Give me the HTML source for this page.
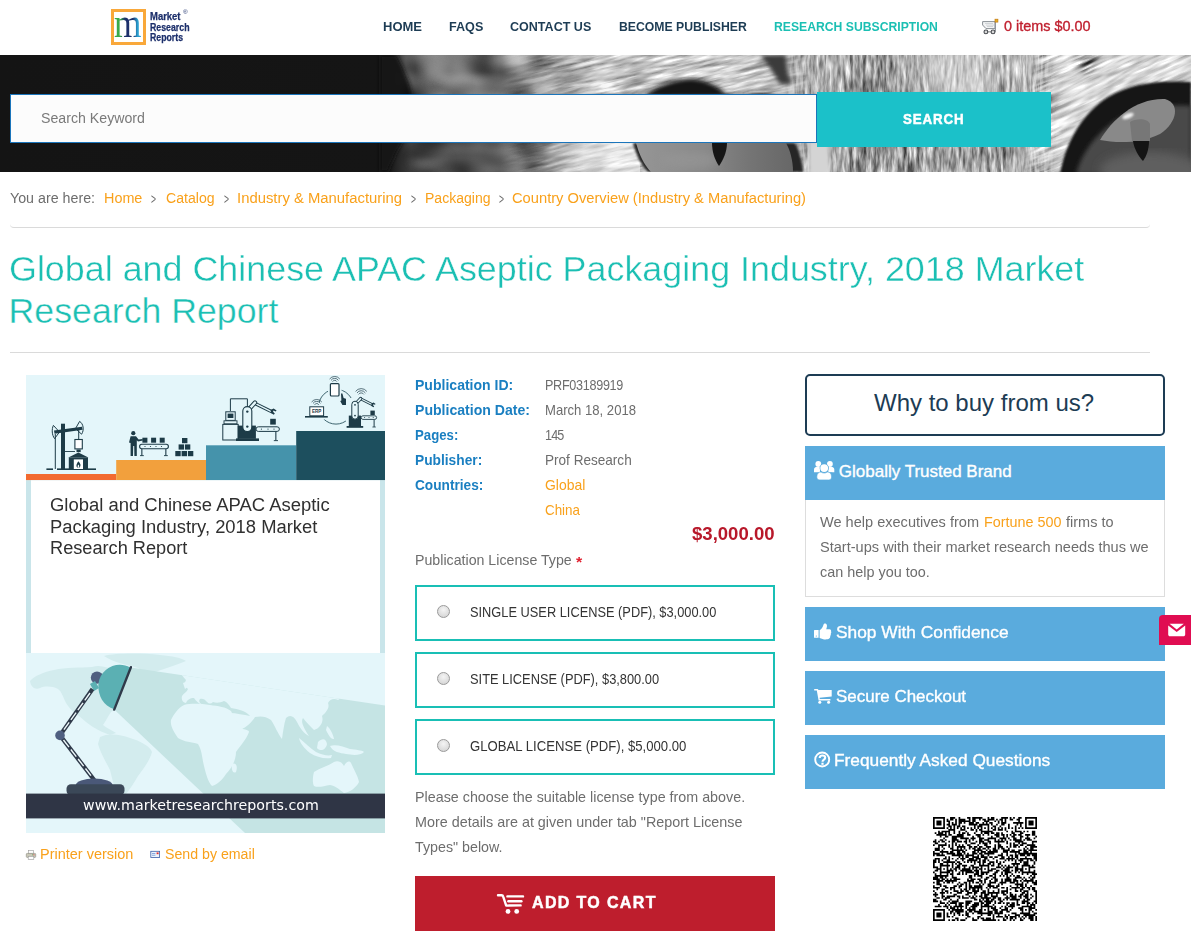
<!DOCTYPE html>
<html lang="en"><head><meta charset="utf-8"><title>Global and Chinese APAC Aseptic Packaging Industry, 2018 Market Research Report</title>
<style>
html,body{margin:0;padding:0;background:#fff;}
body{width:1191px;height:936px;position:relative;overflow:hidden;font-family:'Liberation Sans',sans-serif;}
.t{position:absolute;white-space:pre;transform-origin:0 50%;}
.a{position:absolute;}
svg{position:absolute;overflow:visible;}
</style></head><body>
<!-- logo -->
<div class="a" style="left:111px;top:9px;width:29px;height:30px;border:3px solid #f9a83a;background:#fff"></div>
<span class="t" style="left:114.4px;top:2.7px;font:400 41px/1 'Liberation Serif',serif;color:transparent;background:linear-gradient(90deg,#3aaa4a 0%,#3aaa4a 22%,#1c2f6b 40%,#1c2f6b 68%,#2aa0d0 86%,#2aa0d0 100%);-webkit-background-clip:text;background-clip:text;transform:scaleX(0.86)">m</span>
<!-- search input & button -->
<div class="a" style="left:0;top:55px;width:1191px;height:117px;background:#141414"></div>
<!--BANNER-->
<!-- hr lines -->
<div class="a" style="left:10px;top:222px;width:1140px;height:5px;border-bottom:1px solid #dadada;border-radius:0 0 4px 4px"></div>
<div class="a" style="left:10px;top:352px;width:1140px;height:1px;background:#dadada"></div>
<!-- license boxes -->
<div class="a" style="left:415px;top:585px;width:356px;height:52px;border:2px solid #19bfb5"></div>
<div class="a" style="left:415px;top:652px;width:356px;height:52px;border:2px solid #19bfb5"></div>
<div class="a" style="left:415px;top:719px;width:356px;height:52px;border:2px solid #19bfb5"></div>
<div class="a" style="left:437px;top:605px;width:11px;height:11px;border-radius:50%;border:1px solid #9a9a9a;background:radial-gradient(circle at 50% 35%,#f4f4f4,#cfcfcf)"></div>
<div class="a" style="left:437px;top:672px;width:11px;height:11px;border-radius:50%;border:1px solid #9a9a9a;background:radial-gradient(circle at 50% 35%,#f4f4f4,#cfcfcf)"></div>
<div class="a" style="left:437px;top:739px;width:11px;height:11px;border-radius:50%;border:1px solid #9a9a9a;background:radial-gradient(circle at 50% 35%,#f4f4f4,#cfcfcf)"></div>
<!-- add to cart -->
<div class="a" style="left:415px;top:876px;width:360px;height:55px;background:#be1e2d"></div>
<!-- right column -->
<div class="a" style="left:805px;top:374px;width:356px;height:58px;border:2px solid #1d3c54;border-radius:5px"></div>
<div class="a" style="left:805px;top:446px;width:360px;height:54px;background:#5aabdd"></div>
<div class="a" style="left:805px;top:500px;width:358px;height:96px;border:1px solid #ddd;border-top:none"></div>
<div class="a" style="left:805px;top:607px;width:360px;height:54px;background:#5aabdd"></div>
<div class="a" style="left:805px;top:671px;width:360px;height:54px;background:#5aabdd"></div>
<div class="a" style="left:805px;top:735px;width:360px;height:54px;background:#5aabdd"></div>
<div class="a" style="left:1159px;top:615px;width:32px;height:30px;background:#e00d52;border-radius:4px 0 0 0"></div>

<svg style="left:0;top:55px" width="1191" height="117" viewBox="0 55 1191 117">
<defs>
<linearGradient id="gL" gradientUnits="userSpaceOnUse" x1="0" y1="0" x2="1191" y2="0">
<stop offset="0" stop-color="#141414"/><stop offset="0.327" stop-color="#151515"/><stop offset="0.341" stop-color="#606060"/><stop offset="0.36" stop-color="#7a7a7a"/><stop offset="0.42" stop-color="#808080"/><stop offset="0.46" stop-color="#9a9a9a"/><stop offset="0.51" stop-color="#c2c2c2"/><stop offset="0.63" stop-color="#c6c6c6"/><stop offset="0.68" stop-color="#b0b0b0"/><stop offset="0.76" stop-color="#acacac"/><stop offset="0.80" stop-color="#c0c0c0"/><stop offset="0.84" stop-color="#b4b4b4"/><stop offset="0.875" stop-color="#bcbcbc"/><stop offset="0.9" stop-color="#d8d8d8"/><stop offset="1" stop-color="#d4d4d4"/>
</linearGradient>
<linearGradient id="gB" gradientUnits="userSpaceOnUse" x1="0" y1="0" x2="1191" y2="0">
<stop offset="0" stop-color="#141414"/><stop offset="0.325" stop-color="#151515"/><stop offset="0.345" stop-color="#3e3e3e"/><stop offset="0.39" stop-color="#484848"/><stop offset="0.42" stop-color="#5e5e5e"/><stop offset="0.46" stop-color="#8a8a8a"/><stop offset="0.49" stop-color="#d8d8d8"/><stop offset="0.525" stop-color="#e2e2e2"/>
</linearGradient>
<filter id="furH" x="0" y="0" width="100%" height="100%" color-interpolation-filters="sRGB">
<feTurbulence type="fractalNoise" baseFrequency="0.032 0.24" numOctaves="3" seed="7"/>
<feColorMatrix type="matrix" values="1.4 1.4 0 0 -0.88  1.4 1.4 0 0 -0.88  1.4 1.4 0 0 -0.88  0 0 0 0 1"/>
</filter>
<filter id="furV" x="0" y="0" width="100%" height="100%" color-interpolation-filters="sRGB">
<feTurbulence type="fractalNoise" baseFrequency="0.3 0.05" numOctaves="3" seed="3"/>
<feColorMatrix type="matrix" values="0.9 0.9 0 0 -0.4  0.9 0.9 0 0 -0.4  0.9 0.9 0 0 -0.4  0 0 0 0 1"/>
</filter>
<filter id="mot" x="0" y="0" width="100%" height="100%" color-interpolation-filters="sRGB"><feTurbulence type="fractalNoise" baseFrequency="0.02 0.035" numOctaves="2" seed="5"/><feColorMatrix type="matrix" values="0.7 0.7 0 0 -0.2  0.7 0.7 0 0 -0.2  0.7 0.7 0 0 -0.2  0 0 0 0 1"/></filter>
<linearGradient id="fadeM" gradientUnits="userSpaceOnUse" x1="395" y1="0" x2="600" y2="0"><stop offset="0" stop-color="#000"/><stop offset="0.1" stop-color="#fff"/><stop offset="0.6" stop-color="#fff"/><stop offset="1" stop-color="#000"/></linearGradient>
<mask id="mM"><rect x="395" y="55" width="205" height="117" fill="url(#fadeM)"/></mask>
<filter id="bl2"><feGaussianBlur stdDeviation="2"/></filter>
<filter id="bl1"><feGaussianBlur stdDeviation="0.8"/></filter>
<filter id="bl4"><feGaussianBlur stdDeviation="5"/></filter>
<filter id="bl8"><feGaussianBlur stdDeviation="9"/></filter>
<clipPath id="cb"><rect x="0" y="55" width="1191" height="117"/></clipPath>
<linearGradient id="fadeL" gradientUnits="userSpaceOnUse" x1="500" y1="0" x2="620" y2="0"><stop offset="0" stop-color="#000"/><stop offset="1" stop-color="#fff"/></linearGradient>
<linearGradient id="fadeR" gradientUnits="userSpaceOnUse" x1="755" y1="0" x2="815" y2="0"><stop offset="0" stop-color="#fff"/><stop offset="1" stop-color="#000"/></linearGradient>
<mask id="mH"><rect x="500" y="55" width="256" height="117" fill="url(#fadeL)"/><rect x="755" y="55" width="60" height="117" fill="url(#fadeR)"/></mask>
<mask id="mV"><rect x="795" y="40" width="250" height="150" fill="#fff" filter="url(#bl8)"/></mask>
<mask id="mR"><path d="M1040 40 L1200 40 L1200 100 L1110 100 C1090 120,1075 150,1070 190 L1030 190Z" fill="#fff" filter="url(#bl4)"/></mask>
</defs>
<g clip-path="url(#cb)">
<rect x="0" y="55" width="1191" height="117" fill="url(#gL)"/>
<rect x="0" y="143" width="640" height="29" fill="url(#gB)"/>
<!-- curved black edge on left -->
<path d="M380 55 L397 55 C404 70,412 85,413 100 C413 120,404 140,398 150 C394 158,390 166,388 172 L380 172Z" fill="#151515" filter="url(#bl2)"/>
<!-- blurry mottling on left fur -->
<g filter="url(#bl4)" opacity="0.55"><ellipse cx="440" cy="68" rx="25" ry="9" fill="#909090"/><ellipse cx="500" cy="86" rx="20" ry="8" fill="#555"/><ellipse cx="430" cy="160" rx="18" ry="7" fill="#666"/><ellipse cx="475" cy="62" rx="14" ry="6" fill="#505050"/><ellipse cx="540" cy="66" rx="16" ry="6" fill="#606060"/></g>
<!-- forehead darker stripes -->
<g filter="url(#bl4)" opacity="0.55"><rect x="850" y="55" width="40" height="117" fill="#7a7a7a"/><rect x="900" y="140" width="110" height="32" fill="#808080"/><rect x="930" y="55" width="60" height="40" fill="#d8d8d8"/><path d="M1075 55 L1098 55 L1092 75 L1082 72Z" fill="#444"/></g>
<g mask="url(#mM)" style="mix-blend-mode:overlay"><rect x="395" y="55" width="205" height="117" filter="url(#mot)"/></g>
<!-- fur textures -->
<g mask="url(#mH)" style="mix-blend-mode:overlay"><g transform="rotate(-13 700 100)"><rect x="450" y="0" width="500" height="260" filter="url(#furH)"/></g></g>
<g mask="url(#mR)" style="mix-blend-mode:overlay"><g transform="rotate(-24 1120 80)"><rect x="980" y="-40" width="320" height="300" filter="url(#furH)"/></g></g>
<g mask="url(#mV)" style="mix-blend-mode:overlay"><rect x="770" y="55" width="300" height="117" filter="url(#furV)"/></g>
<!-- left eye: upper dark lid -->
<path d="M643 97 C656 85,676 79,692 79 C708 80,720 87,729 97Z" fill="#181818" filter="url(#bl2)"/>
<path d="M736 96 C750 92,765 92,782 96Z" fill="#2a2a2a" filter="url(#bl1)"/>
<!-- dark vertical stripe between eyes -->
<path d="M760 55 L786 55 C786 66,788 76,792 84 L780 84 C774 74,768 64,760 55Z" fill="#3a3a3a" filter="url(#bl2)"/>
<!-- left eye lower: iris -->
<path d="M633 143 C636 155,641 165,648 172 L803 172 C802 160,799 150,795 143Z" fill="#262626" filter="url(#bl1)"/>
<linearGradient id="gI" gradientUnits="userSpaceOnUse" x1="635" y1="0" x2="790" y2="0"><stop offset="0" stop-color="#969696"/><stop offset="0.45" stop-color="#888"/><stop offset="0.75" stop-color="#747474"/><stop offset="1" stop-color="#686868"/></linearGradient><path d="M636 143 C639 154,644 165,651 172 L793 172 C793 160,790 150,786 143Z" fill="url(#gI)"/>
<ellipse cx="690" cy="160" rx="30" ry="8" fill="#969696" filter="url(#bl4)" opacity="0.7"/>
<path d="M712 143 L727 143 C727 152,723 160,719 166 C715 160,712 152,712 143Z" fill="#161616"/>
<rect x="808" y="140" width="22" height="36" fill="#d4d4d4" filter="url(#bl2)"/>
<!-- right eye -->
<path d="M1060 174 C1066 140,1084 112,1108 97 C1132 83,1160 80,1191 82 L1191 174Z" fill="#151515" filter="url(#bl1)"/>
<path d="M1076 174 C1082 152,1096 134,1116 120 C1138 108,1165 104,1191 106 L1191 174Z" fill="#484848" filter="url(#bl2)"/><ellipse cx="1150" cy="170" rx="50" ry="18" fill="#5e5e5e" filter="url(#bl4)"/>
<path d="M1100 140 C1112 120,1135 98,1165 99 C1180 103,1178 122,1160 134 C1140 144,1116 143,1100 140Z" fill="#898989"/>
<path d="M1130 122 C1136 118,1148 118,1150 124 L1150 141 L1132 141Z" fill="#777"/>
<path d="M1133 141 L1149 141 C1149 150,1146 157,1143 161 C1138 156,1134 148,1133 141Z" fill="#141414"/>
<ellipse cx="1128" cy="116" rx="6" ry="2.6" transform="rotate(-22 1128 116)" fill="#f0f0f0" filter="url(#bl1)"/>
</g>
</svg>
<!-- search input & button -->
<div class="a" style="left:10px;top:94px;width:805px;height:47px;border:1px solid #1b75bb;background:#fcfcfc"></div>
<div class="a" style="left:817px;top:92px;width:234px;height:55px;background:#1bc1c9"></div>

<svg style="left:26px;top:375px" width="359" height="458" viewBox="26 375 359 458">
<defs><clipPath id="cc"><rect x="26" y="375" width="359" height="458"/></clipPath></defs>
<g clip-path="url(#cc)">
<rect x="26" y="375" width="359" height="458" fill="#e4f6fa"/>
<!-- steps -->
<rect x="26" y="474" width="90.2" height="6.3" fill="#f26a30"/>
<rect x="116.2" y="460" width="90" height="20.3" fill="#f2a03d"/>
<rect x="206" y="445.3" width="90.2" height="35" fill="#4593ab"/>
<rect x="296.2" y="431" width="88.8" height="49.3" fill="#1d4f5e"/>
<!-- white panel -->
<rect x="26" y="480.3" width="359" height="172.7" fill="#c9e5ea"/>
<rect x="31" y="480.3" width="349" height="172.7" fill="#fff"/>
<g fill="#1d3b47" stroke="none">
<!-- pump / forge -->
<rect x="46.4" y="468.4" width="6.6" height="1.6"/><rect x="57" y="468.4" width="39" height="1.6"/>
<rect x="61" y="423.7" width="4" height="45.5"/>
<rect x="54.8" y="434" width="1" height="35"/>
<path d="M54 430.6 L82 426.8 L82.6 429.8 L54.6 433.8Z"/>
<path d="M59.5 432 L53.4 425.4 C51.6 429,51.8 435,54.6 438.6Z" fill="none" stroke="#1d3b47" stroke-width="1" stroke-linejoin="round"/>
<path d="M75.5 428.6 L79.6 421.4 C83.4 423.6,84.4 430,81.6 434.2Z" fill="none" stroke="#1d3b47" stroke-width="1" stroke-linejoin="round"/>
<rect x="78.2" y="430" width="1" height="9"/>
<rect x="74.9" y="439.5" width="7.4" height="9.4" fill="#fff" stroke="#1d3b47" stroke-width="1.1"/>
<rect x="76.5" y="449.5" width="4.2" height="2.6"/>
<rect x="65" y="451" width="10" height="0.9"/>
<path d="M78.4 452.6 L88.4 457.6 L68.4 457.6Z"/>
<rect x="68.8" y="457.4" width="19.2" height="11.8"/>
<rect x="73.8" y="459.4" width="9.2" height="9.6" fill="#fff"/>
<path d="M78.4 461.2 C80.6 463.4,81.2 465.6,79.6 467.6 L77.2 467.6 C75.6 465.8,76.6 463.6,78.4 461.2Z"/>
<path d="M78.4 464.6 C79.3 465.6,79.4 466.6,78.9 467.4 L77.9 467.4 C77.4 466.6,77.6 465.6,78.4 464.6Z" fill="#fff"/>
<!-- worker -->
<circle cx="133.3" cy="433.2" r="2.1"/>
<path d="M130.6 436.2 L136 436.2 L138.6 439.4 L142.6 439 L142.8 440.6 L138 441.4 L136.8 440.2 L136.8 455.9 L134.4 455.9 L134.2 446 L133.2 446 L133 455.9 L130.6 455.9 L130.6 443 L129 442.6Z"/>
<!-- conveyor 1 -->
<rect x="139.6" y="444.3" width="28.8" height="4.4" rx="2.2" fill="#e4f6fa" stroke="#1d3b47" stroke-width="1.1"/>
<circle cx="145" cy="446.5" r="0.6"/><circle cx="150.5" cy="446.5" r="0.6"/><circle cx="156" cy="446.5" r="0.6"/><circle cx="161.5" cy="446.5" r="0.6"/>
<rect x="141.3" y="449" width="1.1" height="6.6"/><rect x="165.3" y="449" width="1.1" height="6.6"/>
<rect x="140" y="455.2" width="3.8" height="0.9"/><rect x="164" y="455.2" width="3.8" height="0.9"/>
<rect x="142.4" y="437.7" width="5" height="5"/><rect x="151.1" y="437.7" width="5" height="5"/><rect x="159.7" y="437.7" width="5" height="5"/>
<!-- stack -->
<rect x="182" y="438" width="5.4" height="5.2"/>
<rect x="178.6" y="444.4" width="5.4" height="5.2"/><rect x="184.9" y="444.4" width="5.4" height="5.2"/>
<rect x="175.3" y="451" width="5.4" height="5.2"/><rect x="181.6" y="451" width="5.4" height="5.2"/><rect x="187.9" y="451" width="5.4" height="5.2"/>
<!-- machine + robot arm -->
<path d="M230.4 411 L230.4 398.8 L247.4 398.8 L247.4 406" fill="none" stroke="#1d3b47" stroke-width="1"/>
<rect x="225.8" y="411.8" width="9.4" height="8.6" fill="#e4f6fa" stroke="#1d3b47" stroke-width="1"/>
<rect x="227.6" y="413.6" width="5.8" height="4.4"/>
<rect x="224" y="420.8" width="13" height="3" fill="#e4f6fa" stroke="#1d3b47" stroke-width="0.9"/>
<rect x="222.8" y="424.4" width="15.4" height="15.6" fill="#e4f6fa" stroke="#1d3b47" stroke-width="1"/>
<rect x="237.7" y="425.6" width="18.2" height="13.2"/>
<rect x="236" y="438.4" width="23" height="2.6"/>
<path d="M255 403.4 L271.4 411.6" stroke="#1d3b47" stroke-width="3.4" stroke-linecap="round" fill="none"/>
<path d="M255 403.4 L271.4 411.6" stroke="#e4f6fa" stroke-width="1.5" stroke-linecap="round" fill="none"/>
<path d="M247.4 411 L255 402.6" stroke="#1d3b47" stroke-width="4.4" stroke-linecap="round" fill="none"/>
<path d="M247.4 411 L255 402.6" stroke="#e4f6fa" stroke-width="2.4" stroke-linecap="round" fill="none"/>
<rect x="242.8" y="406.6" width="9" height="25" rx="4.5" fill="#e4f6fa" stroke="#1d3b47" stroke-width="1.1"/>
<circle cx="247.3" cy="411.6" r="1.2"/><circle cx="247.3" cy="426.6" r="1.2"/>
<path d="M270.6 410 L273.6 408.4 L276.6 410.4 L275.6 411.4 L273.6 410.4 L272.8 411.6 L274.8 413.6 L273.8 414.8 L271 413Z"/>
<rect x="270.2" y="418.8" width="5.6" height="5.8"/>
<rect x="256" y="426.8" width="23.4" height="4.6" rx="2.3" fill="#e4f6fa" stroke="#1d3b47" stroke-width="1"/>
<circle cx="261.4" cy="429.1" r="0.6"/><circle cx="268" cy="429.1" r="0.6"/><circle cx="274" cy="429.1" r="0.6"/>
<rect x="275.3" y="431.6" width="1.1" height="9"/><rect x="273.8" y="440.2" width="4.2" height="0.9"/>
<!-- IoT -->
<circle cx="336" cy="406.7" r="17.4" fill="none" stroke="#2b5560" stroke-width="0.9"/>
<rect x="328" y="381" width="13.6" height="17.4" fill="#e4f6fa"/>
<rect x="330.4" y="383.6" width="8.6" height="12.4" rx="1" fill="#fff" stroke="#1d3b47" stroke-width="1.2"/>
<g fill="none" stroke="#1d3b47" stroke-width="0.7"><path d="M332.6 381.6 A2.4 2.4 0 0 1 336.8 381.6"/><path d="M331 380.4 A4.4 4.4 0 0 1 338.4 380.4"/><path d="M329.6 379 A6.4 6.4 0 0 1 339.8 379"/></g>
<path d="M341 393.6 L342.4 393.4 L343.6 398 L346.6 399 L347.2 403 L346 405 L342.4 405 L340.2 401 L341.4 400.4Z"/>
<rect x="304" y="402" width="25" height="17.4" fill="#e4f6fa"/>
<rect x="309.8" y="406.8" width="13.8" height="9" fill="#fff" stroke="#1d3b47" stroke-width="1"/>
<rect x="305" y="416" width="22.8" height="1.6"/>
<g fill="none" stroke="#1d3b47" stroke-width="0.7"><path d="M314.6 404.8 A2.4 2.4 0 0 1 318.8 404.8"/><path d="M313 403.4 A4.4 4.4 0 0 1 320.4 403.4"/><path d="M311.6 402 A6.4 6.4 0 0 1 321.8 402"/></g>
<rect x="346" y="398" width="32" height="30" fill="#e4f6fa"/>
<rect x="348.8" y="415.6" width="12.2" height="10.8"/><rect x="346.6" y="426" width="16.6" height="1.8"/>
<path d="M360.6 398.8 L372 404.6" stroke="#1d3b47" stroke-width="2.8" stroke-linecap="round" fill="none"/>
<path d="M360.6 398.8 L372 404.6" stroke="#e4f6fa" stroke-width="1.1" stroke-linecap="round" fill="none"/>
<path d="M355 404.6 L360.6 398.6" stroke="#1d3b47" stroke-width="3.4" stroke-linecap="round" fill="none"/>
<path d="M355 404.6 L360.6 398.6" stroke="#e4f6fa" stroke-width="1.6" stroke-linecap="round" fill="none"/>
<rect x="351.8" y="401.2" width="6.4" height="18" rx="3.2" fill="#e4f6fa" stroke="#1d3b47" stroke-width="1"/>
<circle cx="355" cy="404.8" r="0.9"/><circle cx="355" cy="415.6" r="0.9"/>
<path d="M371.4 403.4 L373.6 402.4 L375.6 404 L374.8 404.8 L373.4 404 L372.8 405 L374.2 406.4 L373.4 407.2 L371.4 406Z"/>
<g fill="none" stroke="#1d3b47" stroke-width="0.7"><path d="M358.6 394.4 A3 3 0 0 1 363.8 394.4"/><path d="M357 393 A5 5 0 0 1 365.4 393"/><path d="M355.6 391.4 A7 7 0 0 1 366.8 391.4"/></g>
<rect x="370.4" y="410.6" width="4.4" height="4.4"/>
<rect x="361.2" y="415.8" width="15.4" height="3.6" rx="1.8" fill="#e4f6fa" stroke="#1d3b47" stroke-width="0.9"/>
<circle cx="364.6" cy="417.6" r="0.5"/><circle cx="369" cy="417.6" r="0.5"/><circle cx="373.2" cy="417.6" r="0.5"/>
<rect x="373.6" y="419.6" width="1" height="7.4"/><rect x="372.4" y="426.6" width="3.4" height="0.8"/>
</g>
<text x="316.7" y="413.3" font-family="'Liberation Sans',sans-serif" font-size="4.6" font-weight="700" fill="#1d3b47" text-anchor="middle">ERP</text>

<defs><clipPath id="beam"><path d="M130.7 667.4 L385 705.6 L385 833 L245 833 L113.9 709.3Z"/></clipPath></defs>
<!-- map outside beam (Americas, Greenland) -->
<g fill="#d3ecee">
<path d="M30 681 C34 676,44 672,54 670 C66 667,80 668,92 667 C100 664,108 668,116 670 C124 672,132 678,136 684 C134 690,128 694,124 699 C120 704,116 709,111 712 C108 716,106 721,103 725 C106 728,112 730,116 733 L110 735 C104 733,98 730,93 727 C88 724,84 720,79 716 C74 713,70 709,66 703 C63 697,62 692,58 689 C52 686,45 686,40 688 C36 690,31 688,30 681Z"/>
<path d="M104 656 C116 653,140 653,160 655 C172 656,182 658,186 661 C178 664,168 668,158 671 C150 674,144 672,138 668 C128 665,112 662,104 656Z"/>
<path d="M100 737 C108 733,120 734,130 738 C140 741,150 746,152 752 C150 760,144 768,138 776 C134 783,130 789,126 794 L116 794 C114 786,112 778,110 770 C106 762,100 752,98 744Z"/>
</g>
<!-- beam -->
<path d="M130.7 667.4 L385 705.6 L385 833 L245 833 L113.9 709.3Z" fill="#c5e4e4"/>
<g clip-path="url(#beam)" fill="#e4f6fa">
<!-- Eurasia (merges with bg above beam) -->
<path d="M176 660 L392 660 L392 700 C380 698,366 696,352 694 C346 694,342 697,338 700 C334 698,330 699,328 703 C330 708,326 712,322 716 C324 722,320 728,314 730 C310 726,306 722,303 718 C300 722,305 730,309 736 C304 734,300 728,297 722 C294 716,290 714,286 718 C284 724,283 732,282 739 C278 734,275 726,271 720 C266 716,260 716,255 717 C252 722,246 728,241 729 C238 724,234 718,230 713 C236 713,244 715,250 716 C246 711,238 709,231 708 C229 705,227 702,224 701 C220 703,216 703,213 702 C211 704,209 704,207 702 C205 699,202 698,200 699 C198 701,200 704,203 705 C199 704,196 701,194 698 C190 698,187 700,186 703 C183 703,181 700,182 696 C184 693,187 692,188 689 C185 687,184 684,186 680 C182 676,178 670,176 660Z"/>
<!-- UK etc. -->
<path d="M183 683 L188 681 L189 686 L185 689Z"/>
<!-- Mediterranean cut handled by path above; Africa -->
<path d="M184 705 C192 703,202 704,210 705 C218 706,226 707,231 711 C234 718,238 724,243 729 C246 730,249 730,249 732 C246 740,240 746,236 752 C236 760,232 768,226 774 C222 780,218 784,212 786 C208 782,206 774,204 766 C202 758,202 750,198 744 C192 742,184 742,178 738 C174 732,170 726,171 720 C174 714,178 708,184 705Z"/>
<path d="M232 764 C236 762,238 766,236 772 C233 774,231 770,232 764Z"/>
<!-- Indonesia -->
<path d="M299 738 C304 742,310 748,316 752 C322 755,328 756,332 755 L331 758 C324 759,316 757,310 753 C304 748,300 743,299 738Z"/>
<path d="M318 742 C322 738,326 738,327 744 C326 750,320 752,317 748Z"/>
<path d="M330 746 C336 744,344 747,350 749 C356 750,362 750,364 752 C360 756,352 755,346 754 C340 753,333 752,330 746Z"/>
<path d="M327 726 C330 728,333 734,334 739 C331 740,328 734,326 730Z"/>
<!-- Australia -->
<path d="M314 772 C320 768,328 766,334 762 C338 760,342 762,344 766 C346 762,349 760,351 763 C354 770,358 776,359 782 C356 788,350 792,344 793 C340 790,336 786,330 785 C324 786,318 788,314 786 C312 782,313 776,314 772Z"/>
</g>
<!-- lamp -->
<circle cx="97" cy="677.6" r="6.2" fill="#4f5f80"/>
<path d="M90 684 L95 681 L99 688 L94 691Z" fill="#5bb0b3"/>
<g stroke="#2f3a4a" stroke-width="4.2" stroke-linecap="butt" fill="none"><path d="M92.5 689 L60 735.4"/><path d="M60 735.4 L94.2 780"/></g>
<g stroke="#eef8fa" stroke-width="1.4" stroke-dasharray="9 3" fill="none"><path d="M90 693 L63 731"/><path d="M63.5 740 L92 777"/></g>
<circle cx="60" cy="735.4" r="4.8" fill="#4f5f80"/>
<path d="M130.2 667.6 C118 660,100 668,98.4 684 C97.6 696,104 706,113.6 709Z" fill="#5bb0b3"/>
<path d="M130.9 667.2 L114.2 709.6" stroke="#2f3a4a" stroke-width="2.4" stroke-linecap="round" fill="none"/>
<ellipse cx="94.2" cy="785.4" rx="18.5" ry="7" fill="#4a5878"/>
<rect x="66.5" y="784.2" width="58" height="11" rx="4.5" fill="#3b4858"/>
<!-- url band -->
<rect x="26" y="793.6" width="359" height="24.8" fill="#2f3545"/>

</g>
</svg>

<svg style="left:0;top:0" width="1191" height="936" viewBox="0 0 1191 936">
<!-- header cart icon -->
<g>
<path d="M982.6 21.6 L995 21.6 L995 28.6 L986 28.6 L982.6 25Z" fill="#f3f4f5" stroke="#8b9096" stroke-width="1"/>
<g fill="#9aa0a6"><circle cx="986" cy="23.6" r="0.5"/><circle cx="988" cy="23.6" r="0.5"/><circle cx="990" cy="23.6" r="0.5"/><circle cx="992" cy="23.6" r="0.5"/><circle cx="987" cy="25" r="0.5"/><circle cx="989" cy="25" r="0.5"/><circle cx="991" cy="25" r="0.5"/><circle cx="993" cy="25" r="0.5"/><circle cx="988" cy="26.4" r="0.5"/><circle cx="990" cy="26.4" r="0.5"/><circle cx="992" cy="26.4" r="0.5"/></g>
<path d="M995.4 21 L995.4 31 C995.4 32.4,994.4 32.6,993.6 32.6" fill="none" stroke="#8b9096" stroke-width="1"/>
<rect x="987" y="31.2" width="6" height="1.2" fill="#9a9a9a"/>
<circle cx="985.9" cy="31.9" r="1.9" fill="#d8d8d8" stroke="#4a4d52" stroke-width="1.1"/>
<circle cx="993" cy="31.9" r="1.9" fill="#d8d8d8" stroke="#4a4d52" stroke-width="1.1"/>
<rect x="995" y="19.2" width="2.9" height="2.9" fill="#e8b020" stroke="#c47a12" stroke-width="0.7"/>
</g>
<!-- printer icon -->
<g>
<rect x="28.4" y="850.4" width="5.2" height="3.4" fill="#fdfdfd" stroke="#9a9a9a" stroke-width="0.6"/>
<rect x="26.3" y="853.4" width="9.4" height="4" rx="0.8" fill="#c9c8b8" stroke="#8c8b80" stroke-width="0.6"/>
<rect x="28.2" y="856.4" width="5.6" height="3" fill="#fdfdfd" stroke="#9a9a9a" stroke-width="0.6"/>
<rect x="33.4" y="854.4" width="1" height="0.9" fill="#d33"/><rect x="32" y="854.4" width="1" height="0.9" fill="#6a6"/>
</g>
<!-- email icon -->
<g>
<rect x="150.8" y="851.3" width="8.8" height="6.2" fill="#eef4fc" stroke="#3b5fa8" stroke-width="0.8"/>
<rect x="152" y="853" width="3.4" height="0.8" fill="#6d96d8"/><rect x="152" y="854.8" width="3.4" height="0.8" fill="#6d96d8"/>
<rect x="156.6" y="852.4" width="2" height="1.8" fill="#e03030"/>
</g>
<!-- add to cart icon -->
<g fill="none" stroke="#fff" stroke-width="2.4" stroke-linecap="round" stroke-linejoin="round">
<path d="M498 895.2 L501.6 895.2 C502.6 895.2,503 895.8,503.3 896.8 L506.2 905.6 L520.6 905.4"/>
<path d="M507.4 896.4 L523 896.4"/><path d="M508.4 901.2 L521.4 901.2"/>
</g>
<circle cx="508" cy="911.4" r="2.4" fill="#fff"/><circle cx="516.7" cy="911.4" r="2.4" fill="#fff"/>
<!-- users icon -->
<g fill="#fff">
<circle cx="818.3" cy="464" r="2.9"/><circle cx="829.9" cy="464" r="2.9"/>
<path d="M814 472.2 L814 469.6 C814 467.6,815.6 467,817 467 L820 467 L820 472.2 Z"/>
<path d="M834.3 472.2 L834.3 469.6 C834.3 467.6,832.7 467,831.3 467 L828.3 467 L828.3 472.2 Z"/>
<circle cx="824.2" cy="468.1" r="4.6" fill="#5aabdd"/>
<circle cx="824.2" cy="468.1" r="3.9"/>
<path d="M816.2 472.6 L832.2 472.6 L832.2 473.6 Z" fill="#5aabdd"/>
<path d="M816.8 477 C816.8 473.6,818.6 472,821 472 C823 473.4,825.4 473.4,827.4 472 C829.8 472,831.6 473.6,831.6 477 C831.6 479,830.2 479.9,828.6 479.9 L819.8 479.9 C818.2 479.9,816.8 479,816.8 477Z" stroke="#5aabdd" stroke-width="0.6"/>
</g>
<!-- thumbs up -->
<g fill="#fff">
<rect x="814" y="630" width="4.6" height="7.8" rx="0.5"/>
<circle cx="816.3" cy="636" r="0.6" fill="#5aabdd"/>
<path d="M819.6 630.2 C821.6 629,822.8 627,823.4 625 C823.8 623.6,825 623.2,826 623.8 C827.2 624.6,827.2 626.4,826.6 628 L826.2 629.2 L829.6 629.2 C830.8 629.2,831.4 630.2,831 631.2 C831.4 631.8,831.4 632.8,830.8 633.6 C831 634.4,830.8 635.4,830.2 636 C830.4 637,830 638,829.2 638.6 C828.4 639.4,827 639.5,825.6 639.5 C823.4 639.5,821.6 638.8,819.6 638Z"/>
</g>
<!-- cart icon (panel) -->
<g fill="#fff">
<path d="M814.2 689 L817.4 689 C818 689,818.3 689.4,818.4 690 L831.7 690 L831.7 696.4 L819.6 697.8 L819.8 699 L830.4 699 L830.4 700.6 L818.6 700.6 L816.8 690.4 L814.2 690.4Z"/>
<circle cx="819.8" cy="702.2" r="1.5"/><circle cx="828.6" cy="702.2" r="1.5"/>
</g>
<!-- question circle -->
<circle cx="822.2" cy="759.5" r="7" fill="none" stroke="#fff" stroke-width="1.9"/>
<path d="M819.7 758 C819.7 756.4,820.8 755.5,822.4 755.5 C824.1 755.5,825.2 756.4,825.2 757.7 C825.2 759.6,822.5 759.7,822.5 761.7" fill="none" stroke="#fff" stroke-width="2.1"/>
<rect x="821.4" y="762.7" width="2.2" height="2.1" fill="#fff"/>
<!-- envelope -->
<path d="M1169.6 623.8 L1183.8 623.8 L1176.7 629.6Z" fill="#fff"/>
<path d="M1168.2 625.6 L1176.7 632 L1185.2 625.6 L1185.2 634.4 C1185.2 635.6,1184.4 636.2,1183.4 636.2 L1170 636.2 C1169 636.2,1168.2 635.6,1168.2 634.4Z" fill="#fff"/>
</svg>

<svg style="left:933.0px;top:817.0px" width="104.0" height="104.0" viewBox="0 0 61 61" shape-rendering="geometricPrecision"><rect width="61" height="61" fill="#fff"/><path d="M0 0h7v1h-7zM10 0h3v1h-3zM15 0h1v1h-1zM20 0h2v1h-2zM23 0h6v1h-6zM32 0h1v1h-1zM34 0h2v1h-2zM40 0h4v1h-4zM45 0h1v1h-1zM47 0h1v1h-1zM50 0h2v1h-2zM54 0h7v1h-7zM0 1h1v1h-1zM6 1h1v1h-1zM8 1h1v1h-1zM10 1h2v1h-2zM13 1h1v1h-1zM15 1h4v1h-4zM21 1h1v1h-1zM23 1h2v1h-2zM27 1h1v1h-1zM29 1h2v1h-2zM32 1h4v1h-4zM37 1h1v1h-1zM39 1h2v1h-2zM42 1h1v1h-1zM45 1h2v1h-2zM49 1h2v1h-2zM54 1h1v1h-1zM60 1h1v1h-1zM0 2h1v1h-1zM2 2h3v1h-3zM6 2h1v1h-1zM8 2h2v1h-2zM13 2h1v1h-1zM15 2h7v1h-7zM23 2h2v1h-2zM30 2h3v1h-3zM36 2h1v1h-1zM38 2h1v1h-1zM40 2h1v1h-1zM42 2h1v1h-1zM50 2h1v1h-1zM54 2h1v1h-1zM56 2h3v1h-3zM60 2h1v1h-1zM0 3h1v1h-1zM2 3h3v1h-3zM6 3h1v1h-1zM9 3h1v1h-1zM11 3h1v1h-1zM13 3h1v1h-1zM15 3h2v1h-2zM18 3h1v1h-1zM21 3h3v1h-3zM25 3h2v1h-2zM29 3h1v1h-1zM31 3h1v1h-1zM33 3h2v1h-2zM38 3h1v1h-1zM40 3h3v1h-3zM47 3h6v1h-6zM54 3h1v1h-1zM56 3h3v1h-3zM60 3h1v1h-1zM0 4h1v1h-1zM2 4h3v1h-3zM6 4h1v1h-1zM8 4h2v1h-2zM11 4h3v1h-3zM15 4h1v1h-1zM21 4h5v1h-5zM27 4h6v1h-6zM34 4h1v1h-1zM37 4h1v1h-1zM40 4h2v1h-2zM44 4h1v1h-1zM49 4h1v1h-1zM51 4h1v1h-1zM54 4h1v1h-1zM56 4h3v1h-3zM60 4h1v1h-1zM0 5h1v1h-1zM6 5h1v1h-1zM9 5h2v1h-2zM12 5h1v1h-1zM14 5h2v1h-2zM17 5h2v1h-2zM24 5h1v1h-1zM26 5h3v1h-3zM32 5h1v1h-1zM35 5h2v1h-2zM39 5h1v1h-1zM44 5h1v1h-1zM48 5h1v1h-1zM51 5h1v1h-1zM54 5h1v1h-1zM60 5h1v1h-1zM0 6h7v1h-7zM8 6h1v1h-1zM10 6h1v1h-1zM12 6h1v1h-1zM14 6h1v1h-1zM16 6h1v1h-1zM18 6h1v1h-1zM20 6h1v1h-1zM22 6h1v1h-1zM24 6h1v1h-1zM26 6h1v1h-1zM28 6h1v1h-1zM30 6h1v1h-1zM32 6h1v1h-1zM34 6h1v1h-1zM36 6h1v1h-1zM38 6h1v1h-1zM40 6h1v1h-1zM42 6h1v1h-1zM44 6h1v1h-1zM46 6h1v1h-1zM48 6h1v1h-1zM50 6h1v1h-1zM52 6h1v1h-1zM54 6h7v1h-7zM9 7h4v1h-4zM16 7h3v1h-3zM22 7h2v1h-2zM25 7h1v1h-1zM27 7h2v1h-2zM32 7h1v1h-1zM35 7h2v1h-2zM38 7h3v1h-3zM42 7h1v1h-1zM48 7h1v1h-1zM3 8h1v1h-1zM5 8h5v1h-5zM12 8h1v1h-1zM15 8h1v1h-1zM19 8h1v1h-1zM25 8h1v1h-1zM28 8h7v1h-7zM43 8h1v1h-1zM46 8h1v1h-1zM48 8h4v1h-4zM53 8h1v1h-1zM55 8h1v1h-1zM58 8h2v1h-2zM1 9h1v1h-1zM3 9h3v1h-3zM7 9h1v1h-1zM9 9h1v1h-1zM12 9h1v1h-1zM15 9h1v1h-1zM17 9h2v1h-2zM20 9h1v1h-1zM24 9h1v1h-1zM28 9h1v1h-1zM30 9h3v1h-3zM34 9h2v1h-2zM37 9h2v1h-2zM40 9h1v1h-1zM46 9h2v1h-2zM51 9h2v1h-2zM58 9h2v1h-2zM2 10h6v1h-6zM9 10h2v1h-2zM14 10h4v1h-4zM20 10h2v1h-2zM25 10h3v1h-3zM29 10h1v1h-1zM32 10h1v1h-1zM36 10h3v1h-3zM40 10h2v1h-2zM43 10h1v1h-1zM45 10h1v1h-1zM47 10h2v1h-2zM50 10h2v1h-2zM54 10h3v1h-3zM58 10h2v1h-2zM4 11h1v1h-1zM7 11h2v1h-2zM11 11h7v1h-7zM23 11h1v1h-1zM26 11h2v1h-2zM34 11h1v1h-1zM37 11h2v1h-2zM41 11h1v1h-1zM43 11h1v1h-1zM46 11h2v1h-2zM51 11h2v1h-2zM55 11h1v1h-1zM60 11h1v1h-1zM6 12h1v1h-1zM11 12h3v1h-3zM16 12h5v1h-5zM22 12h3v1h-3zM27 12h3v1h-3zM32 12h5v1h-5zM39 12h4v1h-4zM44 12h1v1h-1zM47 12h2v1h-2zM51 12h1v1h-1zM54 12h3v1h-3zM59 12h1v1h-1zM1 13h1v1h-1zM4 13h2v1h-2zM7 13h1v1h-1zM11 13h4v1h-4zM19 13h1v1h-1zM21 13h1v1h-1zM23 13h1v1h-1zM27 13h2v1h-2zM30 13h3v1h-3zM36 13h1v1h-1zM38 13h1v1h-1zM40 13h1v1h-1zM42 13h1v1h-1zM45 13h1v1h-1zM47 13h5v1h-5zM53 13h1v1h-1zM55 13h3v1h-3zM0 14h2v1h-2zM3 14h1v1h-1zM5 14h2v1h-2zM9 14h1v1h-1zM11 14h2v1h-2zM14 14h3v1h-3zM18 14h2v1h-2zM21 14h1v1h-1zM25 14h1v1h-1zM27 14h3v1h-3zM32 14h2v1h-2zM36 14h6v1h-6zM43 14h1v1h-1zM48 14h5v1h-5zM58 14h3v1h-3zM1 15h2v1h-2zM7 15h1v1h-1zM11 15h1v1h-1zM13 15h1v1h-1zM19 15h1v1h-1zM22 15h3v1h-3zM27 15h1v1h-1zM29 15h3v1h-3zM33 15h1v1h-1zM38 15h1v1h-1zM43 15h1v1h-1zM45 15h1v1h-1zM47 15h1v1h-1zM50 15h1v1h-1zM52 15h3v1h-3zM58 15h1v1h-1zM0 16h1v1h-1zM3 16h5v1h-5zM9 16h1v1h-1zM11 16h1v1h-1zM13 16h1v1h-1zM15 16h1v1h-1zM17 16h1v1h-1zM20 16h2v1h-2zM26 16h1v1h-1zM30 16h2v1h-2zM36 16h1v1h-1zM38 16h2v1h-2zM45 16h1v1h-1zM47 16h3v1h-3zM51 16h2v1h-2zM55 16h5v1h-5zM3 17h1v1h-1zM5 17h1v1h-1zM9 17h1v1h-1zM11 17h1v1h-1zM14 17h5v1h-5zM21 17h2v1h-2zM24 17h2v1h-2zM27 17h2v1h-2zM31 17h3v1h-3zM36 17h1v1h-1zM38 17h3v1h-3zM43 17h1v1h-1zM45 17h1v1h-1zM47 17h2v1h-2zM50 17h1v1h-1zM54 17h1v1h-1zM57 17h4v1h-4zM1 18h3v1h-3zM6 18h1v1h-1zM10 18h2v1h-2zM14 18h1v1h-1zM16 18h1v1h-1zM18 18h1v1h-1zM21 18h1v1h-1zM23 18h2v1h-2zM26 18h2v1h-2zM29 18h2v1h-2zM32 18h1v1h-1zM35 18h2v1h-2zM38 18h1v1h-1zM40 18h2v1h-2zM44 18h1v1h-1zM53 18h1v1h-1zM55 18h1v1h-1zM57 18h2v1h-2zM1 19h3v1h-3zM5 19h1v1h-1zM11 19h7v1h-7zM19 19h1v1h-1zM24 19h5v1h-5zM31 19h1v1h-1zM33 19h1v1h-1zM35 19h3v1h-3zM41 19h4v1h-4zM46 19h2v1h-2zM50 19h2v1h-2zM53 19h2v1h-2zM56 19h5v1h-5zM0 20h1v1h-1zM4 20h5v1h-5zM10 20h2v1h-2zM14 20h2v1h-2zM17 20h2v1h-2zM23 20h2v1h-2zM26 20h1v1h-1zM28 20h3v1h-3zM32 20h6v1h-6zM41 20h3v1h-3zM45 20h6v1h-6zM53 20h3v1h-3zM57 20h1v1h-1zM0 21h4v1h-4zM5 21h1v1h-1zM8 21h5v1h-5zM14 21h3v1h-3zM18 21h1v1h-1zM20 21h1v1h-1zM23 21h3v1h-3zM27 21h2v1h-2zM30 21h6v1h-6zM40 21h1v1h-1zM43 21h1v1h-1zM48 21h1v1h-1zM50 21h11v1h-11zM0 22h1v1h-1zM2 22h5v1h-5zM11 22h7v1h-7zM19 22h5v1h-5zM26 22h1v1h-1zM28 22h2v1h-2zM32 22h1v1h-1zM38 22h3v1h-3zM43 22h1v1h-1zM45 22h2v1h-2zM48 22h2v1h-2zM51 22h3v1h-3zM55 22h2v1h-2zM58 22h3v1h-3zM7 23h1v1h-1zM9 23h1v1h-1zM15 23h1v1h-1zM17 23h1v1h-1zM19 23h2v1h-2zM23 23h4v1h-4zM28 23h4v1h-4zM33 23h2v1h-2zM36 23h2v1h-2zM40 23h2v1h-2zM44 23h1v1h-1zM46 23h1v1h-1zM48 23h2v1h-2zM54 23h1v1h-1zM59 23h2v1h-2zM1 24h3v1h-3zM6 24h2v1h-2zM9 24h1v1h-1zM11 24h1v1h-1zM14 24h1v1h-1zM16 24h3v1h-3zM21 24h3v1h-3zM25 24h3v1h-3zM30 24h2v1h-2zM35 24h1v1h-1zM39 24h3v1h-3zM43 24h5v1h-5zM49 24h1v1h-1zM51 24h7v1h-7zM59 24h2v1h-2zM0 25h2v1h-2zM3 25h1v1h-1zM5 25h1v1h-1zM8 25h2v1h-2zM13 25h1v1h-1zM17 25h1v1h-1zM20 25h6v1h-6zM27 25h1v1h-1zM29 25h2v1h-2zM32 25h1v1h-1zM37 25h1v1h-1zM42 25h1v1h-1zM44 25h1v1h-1zM46 25h1v1h-1zM48 25h1v1h-1zM50 25h3v1h-3zM55 25h1v1h-1zM57 25h2v1h-2zM60 25h1v1h-1zM0 26h2v1h-2zM3 26h1v1h-1zM6 26h7v1h-7zM14 26h2v1h-2zM18 26h1v1h-1zM20 26h1v1h-1zM22 26h1v1h-1zM24 26h1v1h-1zM26 26h2v1h-2zM29 26h2v1h-2zM33 26h3v1h-3zM37 26h1v1h-1zM39 26h1v1h-1zM41 26h1v1h-1zM48 26h1v1h-1zM51 26h1v1h-1zM53 26h3v1h-3zM59 26h1v1h-1zM0 27h1v1h-1zM4 27h2v1h-2zM8 27h1v1h-1zM11 27h1v1h-1zM13 27h1v1h-1zM15 27h2v1h-2zM24 27h1v1h-1zM27 27h1v1h-1zM29 27h1v1h-1zM32 27h2v1h-2zM35 27h1v1h-1zM38 27h2v1h-2zM46 27h5v1h-5zM53 27h3v1h-3zM59 27h1v1h-1zM0 28h1v1h-1zM4 28h6v1h-6zM11 28h1v1h-1zM14 28h2v1h-2zM17 28h3v1h-3zM22 28h2v1h-2zM27 28h6v1h-6zM34 28h2v1h-2zM38 28h1v1h-1zM40 28h1v1h-1zM42 28h1v1h-1zM44 28h1v1h-1zM47 28h1v1h-1zM49 28h1v1h-1zM52 28h5v1h-5zM58 28h1v1h-1zM0 29h3v1h-3zM4 29h1v1h-1zM8 29h1v1h-1zM11 29h1v1h-1zM13 29h3v1h-3zM18 29h1v1h-1zM21 29h1v1h-1zM23 29h4v1h-4zM28 29h1v1h-1zM32 29h1v1h-1zM37 29h3v1h-3zM41 29h1v1h-1zM43 29h4v1h-4zM48 29h2v1h-2zM52 29h1v1h-1zM56 29h4v1h-4zM2 30h3v1h-3zM6 30h1v1h-1zM8 30h1v1h-1zM10 30h1v1h-1zM12 30h2v1h-2zM15 30h1v1h-1zM17 30h5v1h-5zM23 30h1v1h-1zM25 30h1v1h-1zM27 30h2v1h-2zM30 30h1v1h-1zM32 30h1v1h-1zM34 30h3v1h-3zM40 30h1v1h-1zM42 30h3v1h-3zM48 30h5v1h-5zM54 30h1v1h-1zM56 30h1v1h-1zM1 31h2v1h-2zM4 31h1v1h-1zM8 31h4v1h-4zM13 31h1v1h-1zM16 31h7v1h-7zM24 31h3v1h-3zM28 31h1v1h-1zM32 31h3v1h-3zM37 31h2v1h-2zM41 31h4v1h-4zM46 31h1v1h-1zM48 31h2v1h-2zM51 31h2v1h-2zM56 31h1v1h-1zM59 31h1v1h-1zM0 32h1v1h-1zM4 32h6v1h-6zM11 32h1v1h-1zM15 32h1v1h-1zM17 32h1v1h-1zM19 32h5v1h-5zM25 32h2v1h-2zM28 32h5v1h-5zM36 32h2v1h-2zM40 32h1v1h-1zM42 32h4v1h-4zM48 32h1v1h-1zM50 32h1v1h-1zM52 32h8v1h-8zM1 33h1v1h-1zM4 33h1v1h-1zM8 33h1v1h-1zM10 33h2v1h-2zM14 33h2v1h-2zM17 33h1v1h-1zM19 33h1v1h-1zM24 33h3v1h-3zM28 33h2v1h-2zM31 33h1v1h-1zM35 33h2v1h-2zM40 33h1v1h-1zM42 33h2v1h-2zM46 33h1v1h-1zM52 33h1v1h-1zM55 33h1v1h-1zM58 33h3v1h-3zM1 34h8v1h-8zM11 34h1v1h-1zM21 34h2v1h-2zM24 34h1v1h-1zM26 34h3v1h-3zM33 34h2v1h-2zM36 34h1v1h-1zM39 34h1v1h-1zM41 34h1v1h-1zM43 34h1v1h-1zM45 34h1v1h-1zM47 34h1v1h-1zM49 34h2v1h-2zM57 34h1v1h-1zM59 34h1v1h-1zM0 35h3v1h-3zM4 35h2v1h-2zM7 35h1v1h-1zM11 35h3v1h-3zM21 35h2v1h-2zM28 35h1v1h-1zM31 35h2v1h-2zM35 35h2v1h-2zM43 35h2v1h-2zM48 35h4v1h-4zM53 35h1v1h-1zM56 35h1v1h-1zM58 35h2v1h-2zM0 36h4v1h-4zM5 36h2v1h-2zM8 36h1v1h-1zM10 36h1v1h-1zM12 36h4v1h-4zM20 36h1v1h-1zM22 36h3v1h-3zM26 36h2v1h-2zM30 36h2v1h-2zM34 36h1v1h-1zM36 36h2v1h-2zM40 36h1v1h-1zM42 36h4v1h-4zM47 36h2v1h-2zM52 36h1v1h-1zM54 36h1v1h-1zM57 36h2v1h-2zM2 37h4v1h-4zM7 37h7v1h-7zM20 37h4v1h-4zM27 37h2v1h-2zM30 37h1v1h-1zM33 37h1v1h-1zM36 37h2v1h-2zM40 37h1v1h-1zM42 37h4v1h-4zM47 37h3v1h-3zM51 37h1v1h-1zM53 37h6v1h-6zM60 37h1v1h-1zM0 38h1v1h-1zM2 38h2v1h-2zM6 38h1v1h-1zM8 38h2v1h-2zM11 38h1v1h-1zM15 38h1v1h-1zM18 38h2v1h-2zM21 38h1v1h-1zM23 38h1v1h-1zM25 38h2v1h-2zM28 38h1v1h-1zM30 38h1v1h-1zM33 38h4v1h-4zM39 38h4v1h-4zM45 38h3v1h-3zM49 38h1v1h-1zM52 38h1v1h-1zM55 38h1v1h-1zM58 38h3v1h-3zM2 39h3v1h-3zM14 39h1v1h-1zM16 39h2v1h-2zM19 39h1v1h-1zM21 39h1v1h-1zM27 39h1v1h-1zM29 39h1v1h-1zM32 39h2v1h-2zM38 39h1v1h-1zM40 39h1v1h-1zM48 39h5v1h-5zM54 39h1v1h-1zM59 39h2v1h-2zM0 40h1v1h-1zM4 40h1v1h-1zM6 40h2v1h-2zM12 40h2v1h-2zM15 40h2v1h-2zM19 40h1v1h-1zM21 40h2v1h-2zM24 40h5v1h-5zM32 40h4v1h-4zM37 40h2v1h-2zM45 40h1v1h-1zM49 40h1v1h-1zM51 40h2v1h-2zM54 40h1v1h-1zM57 40h1v1h-1zM0 41h4v1h-4zM7 41h2v1h-2zM10 41h3v1h-3zM15 41h1v1h-1zM19 41h1v1h-1zM21 41h8v1h-8zM31 41h1v1h-1zM33 41h1v1h-1zM35 41h3v1h-3zM40 41h2v1h-2zM43 41h1v1h-1zM46 41h5v1h-5zM52 41h2v1h-2zM55 41h2v1h-2zM58 41h2v1h-2zM2 42h1v1h-1zM5 42h2v1h-2zM10 42h1v1h-1zM12 42h1v1h-1zM16 42h1v1h-1zM18 42h2v1h-2zM21 42h1v1h-1zM23 42h2v1h-2zM26 42h1v1h-1zM28 42h1v1h-1zM32 42h1v1h-1zM38 42h1v1h-1zM43 42h1v1h-1zM45 42h1v1h-1zM48 42h1v1h-1zM51 42h2v1h-2zM56 42h1v1h-1zM58 42h2v1h-2zM0 43h1v1h-1zM5 43h1v1h-1zM7 43h2v1h-2zM12 43h3v1h-3zM16 43h2v1h-2zM19 43h2v1h-2zM23 43h4v1h-4zM29 43h2v1h-2zM32 43h1v1h-1zM35 43h1v1h-1zM38 43h1v1h-1zM40 43h4v1h-4zM48 43h2v1h-2zM51 43h1v1h-1zM53 43h3v1h-3zM59 43h2v1h-2zM1 44h1v1h-1zM4 44h3v1h-3zM8 44h1v1h-1zM10 44h1v1h-1zM14 44h3v1h-3zM20 44h3v1h-3zM24 44h2v1h-2zM28 44h3v1h-3zM32 44h7v1h-7zM40 44h2v1h-2zM43 44h1v1h-1zM45 44h1v1h-1zM52 44h2v1h-2zM55 44h1v1h-1zM60 44h1v1h-1zM0 45h3v1h-3zM5 45h1v1h-1zM12 45h2v1h-2zM19 45h2v1h-2zM24 45h1v1h-1zM28 45h1v1h-1zM30 45h3v1h-3zM34 45h1v1h-1zM37 45h1v1h-1zM41 45h2v1h-2zM45 45h2v1h-2zM48 45h1v1h-1zM51 45h2v1h-2zM54 45h2v1h-2zM57 45h1v1h-1zM60 45h1v1h-1zM1 46h1v1h-1zM5 46h2v1h-2zM8 46h5v1h-5zM14 46h2v1h-2zM17 46h1v1h-1zM21 46h1v1h-1zM23 46h1v1h-1zM25 46h1v1h-1zM27 46h2v1h-2zM30 46h2v1h-2zM34 46h4v1h-4zM43 46h1v1h-1zM45 46h4v1h-4zM50 46h2v1h-2zM53 46h3v1h-3zM58 46h1v1h-1zM60 46h1v1h-1zM2 47h2v1h-2zM5 47h1v1h-1zM7 47h3v1h-3zM15 47h1v1h-1zM17 47h4v1h-4zM22 47h3v1h-3zM28 47h6v1h-6zM35 47h2v1h-2zM38 47h2v1h-2zM42 47h3v1h-3zM46 47h3v1h-3zM51 47h1v1h-1zM54 47h2v1h-2zM57 47h1v1h-1zM60 47h1v1h-1zM0 48h2v1h-2zM6 48h2v1h-2zM10 48h1v1h-1zM14 48h1v1h-1zM24 48h2v1h-2zM27 48h1v1h-1zM29 48h1v1h-1zM31 48h2v1h-2zM34 48h2v1h-2zM38 48h2v1h-2zM41 48h1v1h-1zM43 48h1v1h-1zM45 48h6v1h-6zM53 48h1v1h-1zM55 48h2v1h-2zM60 48h1v1h-1zM0 49h3v1h-3zM4 49h1v1h-1zM9 49h1v1h-1zM11 49h4v1h-4zM19 49h4v1h-4zM27 49h2v1h-2zM30 49h5v1h-5zM36 49h1v1h-1zM39 49h2v1h-2zM49 49h1v1h-1zM52 49h4v1h-4zM59 49h2v1h-2zM4 50h3v1h-3zM8 50h1v1h-1zM10 50h4v1h-4zM15 50h3v1h-3zM19 50h3v1h-3zM24 50h3v1h-3zM28 50h2v1h-2zM31 50h3v1h-3zM36 50h1v1h-1zM38 50h2v1h-2zM41 50h1v1h-1zM43 50h2v1h-2zM46 50h2v1h-2zM49 50h1v1h-1zM52 50h2v1h-2zM55 50h2v1h-2zM58 50h1v1h-1zM60 50h1v1h-1zM3 51h1v1h-1zM7 51h1v1h-1zM9 51h1v1h-1zM13 51h1v1h-1zM15 51h2v1h-2zM19 51h2v1h-2zM23 51h4v1h-4zM28 51h1v1h-1zM30 51h3v1h-3zM35 51h1v1h-1zM43 51h1v1h-1zM45 51h3v1h-3zM49 51h2v1h-2zM55 51h1v1h-1zM57 51h3v1h-3zM1 52h4v1h-4zM6 52h3v1h-3zM10 52h1v1h-1zM12 52h6v1h-6zM19 52h1v1h-1zM22 52h4v1h-4zM28 52h7v1h-7zM36 52h1v1h-1zM40 52h1v1h-1zM42 52h1v1h-1zM44 52h4v1h-4zM52 52h6v1h-6zM59 52h1v1h-1zM8 53h1v1h-1zM10 53h3v1h-3zM14 53h1v1h-1zM16 53h1v1h-1zM19 53h1v1h-1zM21 53h1v1h-1zM23 53h2v1h-2zM28 53h1v1h-1zM32 53h1v1h-1zM34 53h3v1h-3zM39 53h1v1h-1zM42 53h2v1h-2zM46 53h1v1h-1zM50 53h3v1h-3zM56 53h4v1h-4zM0 54h7v1h-7zM9 54h1v1h-1zM11 54h7v1h-7zM20 54h5v1h-5zM27 54h2v1h-2zM30 54h1v1h-1zM32 54h1v1h-1zM35 54h3v1h-3zM40 54h4v1h-4zM45 54h1v1h-1zM51 54h2v1h-2zM54 54h1v1h-1zM56 54h2v1h-2zM60 54h1v1h-1zM0 55h1v1h-1zM6 55h1v1h-1zM10 55h2v1h-2zM13 55h5v1h-5zM19 55h1v1h-1zM21 55h2v1h-2zM24 55h5v1h-5zM32 55h3v1h-3zM36 55h2v1h-2zM39 55h2v1h-2zM43 55h2v1h-2zM52 55h1v1h-1zM56 55h1v1h-1zM58 55h1v1h-1zM0 56h1v1h-1zM2 56h3v1h-3zM6 56h1v1h-1zM8 56h1v1h-1zM10 56h1v1h-1zM12 56h1v1h-1zM14 56h2v1h-2zM19 56h2v1h-2zM23 56h1v1h-1zM26 56h9v1h-9zM36 56h5v1h-5zM46 56h3v1h-3zM51 56h6v1h-6zM59 56h2v1h-2zM0 57h1v1h-1zM2 57h3v1h-3zM6 57h1v1h-1zM8 57h1v1h-1zM12 57h1v1h-1zM15 57h1v1h-1zM17 57h1v1h-1zM19 57h2v1h-2zM28 57h1v1h-1zM32 57h2v1h-2zM35 57h1v1h-1zM38 57h1v1h-1zM42 57h1v1h-1zM44 57h1v1h-1zM48 57h3v1h-3zM53 57h7v1h-7zM0 58h1v1h-1zM2 58h3v1h-3zM6 58h1v1h-1zM8 58h2v1h-2zM11 58h1v1h-1zM20 58h2v1h-2zM26 58h2v1h-2zM35 58h1v1h-1zM37 58h4v1h-4zM42 58h2v1h-2zM45 58h4v1h-4zM50 58h1v1h-1zM52 58h1v1h-1zM54 58h1v1h-1zM56 58h3v1h-3zM60 58h1v1h-1zM0 59h1v1h-1zM6 59h1v1h-1zM13 59h2v1h-2zM19 59h1v1h-1zM23 59h1v1h-1zM26 59h1v1h-1zM28 59h2v1h-2zM31 59h3v1h-3zM35 59h1v1h-1zM41 59h1v1h-1zM43 59h1v1h-1zM45 59h2v1h-2zM48 59h1v1h-1zM51 59h1v1h-1zM53 59h1v1h-1zM56 59h3v1h-3zM60 59h1v1h-1zM0 60h7v1h-7zM9 60h1v1h-1zM11 60h2v1h-2zM14 60h1v1h-1zM16 60h3v1h-3zM23 60h3v1h-3zM29 60h8v1h-8zM38 60h1v1h-1zM41 60h2v1h-2zM45 60h1v1h-1zM47 60h1v1h-1zM51 60h2v1h-2zM57 60h2v1h-2zM60 60h1v1h-1z" fill="#000"/></svg>
<span class="t" style="left:382.7px;top:19.9px;font:700 13.5px/1 'Liberation Sans',sans-serif;color:#1d3c54;transform:scaleX(0.963);">HOME</span>
<span class="t" style="left:449.0px;top:19.9px;font:700 13.5px/1 'Liberation Sans',sans-serif;color:#1d3c54;transform:scaleX(0.933);">FAQS</span>
<span class="t" style="left:510.0px;top:19.9px;font:700 13.5px/1 'Liberation Sans',sans-serif;color:#1d3c54;transform:scaleX(0.929);">CONTACT US</span>
<span class="t" style="left:619.0px;top:19.9px;font:700 13.5px/1 'Liberation Sans',sans-serif;color:#1d3c54;transform:scaleX(0.906);">BECOME PUBLISHER</span>
<span class="t" style="left:773.7px;top:19.9px;font:700 13.5px/1 'Liberation Sans',sans-serif;color:#1bbfb3;transform:scaleX(0.903);">RESEARCH SUBSCRIPTION</span>
<span class="t" style="left:1003.7px;top:18.3px;font:400 15px/1 'Liberation Sans',sans-serif;color:#c0202f;transform:scaleX(0.962);-webkit-text-stroke:0.35px #c0202f;">0 items $0.00</span>
<span class="t" style="left:150.0px;top:12.1px;font:700 10.3px/1 'Liberation Sans',sans-serif;color:#1c2f6b;transform:scaleX(0.919);-webkit-text-stroke:0.25px #1c2f6b;">Market</span>
<span class="t" style="left:150.0px;top:22.6px;font:700 10.3px/1 'Liberation Sans',sans-serif;color:#1c2f6b;transform:scaleX(0.852);-webkit-text-stroke:0.25px #1c2f6b;">Research</span>
<span class="t" style="left:150.0px;top:33.0px;font:700 10.3px/1 'Liberation Sans',sans-serif;color:#1c2f6b;transform:scaleX(0.848);-webkit-text-stroke:0.25px #1c2f6b;">Reports</span>
<span class="t" style="left:182.8px;top:9.1px;font:400 6px/1 'Liberation Sans',sans-serif;color:#1c2f6b;transform:scaleX(1.063);">®</span>
<span class="t" style="left:40.5px;top:109.9px;font:400 15.5px/1 'Liberation Sans',sans-serif;color:#7a7a7a;transform:scaleX(0.914);">Search Keyword</span>
<span class="t" style="left:903.0px;top:111.5px;font:700 14.8px/1 'Liberation Sans',sans-serif;color:#fff;letter-spacing:0.95px;transform:scaleX(0.900);-webkit-text-stroke:0.5px #fff;">SEARCH</span>
<span class="t" style="left:10.0px;top:189.6px;font:400 15.5px/1 'Liberation Sans',sans-serif;color:#6d6d6d;transform:scaleX(0.919);">You are here:</span>
<span class="t" style="left:104.3px;top:189.6px;font:400 15.5px/1 'Liberation Sans',sans-serif;color:#f9a11b;transform:scaleX(0.928);">Home</span>
<span class="t" style="left:151.0px;top:191.7px;font:400 13px/1 'Liberation Sans',sans-serif;color:#6d6d6d;transform:scaleX(0.658) scaleY(1.15);">&gt;</span>
<span class="t" style="left:165.7px;top:189.6px;font:400 15.5px/1 'Liberation Sans',sans-serif;color:#f9a11b;transform:scaleX(0.909);">Catalog</span>
<span class="t" style="left:224.0px;top:191.7px;font:400 13px/1 'Liberation Sans',sans-serif;color:#6d6d6d;transform:scaleX(0.658) scaleY(1.15);">&gt;</span>
<span class="t" style="left:237.0px;top:189.6px;font:400 15.5px/1 'Liberation Sans',sans-serif;color:#f9a11b;transform:scaleX(0.958);">Industry &amp; Manufacturing</span>
<span class="t" style="left:410.5px;top:191.7px;font:400 13px/1 'Liberation Sans',sans-serif;color:#6d6d6d;transform:scaleX(0.658) scaleY(1.15);">&gt;</span>
<span class="t" style="left:424.5px;top:189.6px;font:400 15.5px/1 'Liberation Sans',sans-serif;color:#f9a11b;transform:scaleX(0.905);">Packaging</span>
<span class="t" style="left:498.5px;top:191.7px;font:400 13px/1 'Liberation Sans',sans-serif;color:#6d6d6d;transform:scaleX(0.658) scaleY(1.15);">&gt;</span>
<span class="t" style="left:512.0px;top:189.6px;font:400 15.5px/1 'Liberation Sans',sans-serif;color:#f9a11b;transform:scaleX(0.948);">Country Overview (Industry &amp; Manufacturing)</span>
<span class="t" style="left:8.8px;top:252.1px;font:400 35.7px/1 'Liberation Sans',sans-serif;color:#1bbfb3;transform:scaleX(1.005);-webkit-text-stroke:0.4px #fff;">Global and Chinese APAC Aseptic Packaging Industry, 2018 Market</span>
<span class="t" style="left:8.6px;top:294.0px;font:400 35.7px/1 'Liberation Sans',sans-serif;color:#1bbfb3;-webkit-text-stroke:0.4px #fff;">Research Report</span>
<span class="t" style="left:415.0px;top:377.3px;font:700 15px/1 'Liberation Sans',sans-serif;color:#1a7fc1;transform:scaleX(0.936);">Publication ID:</span>
<span class="t" style="left:415.0px;top:402.3px;font:700 15px/1 'Liberation Sans',sans-serif;color:#1a7fc1;transform:scaleX(0.939);">Publication Date:</span>
<span class="t" style="left:415.0px;top:427.3px;font:700 15px/1 'Liberation Sans',sans-serif;color:#1a7fc1;transform:scaleX(0.880);">Pages:</span>
<span class="t" style="left:415.0px;top:452.3px;font:700 15px/1 'Liberation Sans',sans-serif;color:#1a7fc1;transform:scaleX(0.917);">Publisher:</span>
<span class="t" style="left:415.0px;top:477.3px;font:700 15px/1 'Liberation Sans',sans-serif;color:#1a7fc1;transform:scaleX(0.911);">Countries:</span>
<span class="t" style="left:545.0px;top:377.3px;font:400 15px/1 'Liberation Sans',sans-serif;color:#6d6d6d;letter-spacing:-0.35px;transform:scaleX(0.840);">PRF03189919</span>
<span class="t" style="left:545.0px;top:402.3px;font:400 15px/1 'Liberation Sans',sans-serif;color:#6d6d6d;transform:scaleX(0.873);">March 18, 2018</span>
<span class="t" style="left:545.0px;top:427.3px;font:400 15px/1 'Liberation Sans',sans-serif;color:#6d6d6d;letter-spacing:-1.03px;transform:scaleX(0.840);">145</span>
<span class="t" style="left:545.0px;top:452.3px;font:400 15px/1 'Liberation Sans',sans-serif;color:#6d6d6d;transform:scaleX(0.904);">Prof Research</span>
<span class="t" style="left:545.0px;top:477.3px;font:400 15px/1 'Liberation Sans',sans-serif;color:#f9a11b;transform:scaleX(0.929);">Global</span>
<span class="t" style="left:545.0px;top:502.3px;font:400 15px/1 'Liberation Sans',sans-serif;color:#f9a11b;transform:scaleX(0.893);">China</span>
<span class="t" style="left:691.7px;top:524.9px;font:700 18.7px/1 'Liberation Sans',sans-serif;color:#b8182a;transform:scaleX(0.993);">$3,000.00</span>
<span class="t" style="left:415.0px;top:552.3px;font:400 15px/1 'Liberation Sans',sans-serif;color:#6d6d6d;transform:scaleX(0.946);">Publication License Type</span>
<span class="t" style="left:575.5px;top:554.3px;font:700 15px/1 'Liberation Sans',sans-serif;color:#e0202f;transform:scaleX(1.061);">*</span>
<span class="t" style="left:469.5px;top:604.3px;font:400 15px/1 'Liberation Sans',sans-serif;color:#333;transform:scaleX(0.854);">SINGLE USER LICENSE (PDF), $3,000.00</span>
<span class="t" style="left:469.5px;top:671.3px;font:400 15px/1 'Liberation Sans',sans-serif;color:#333;transform:scaleX(0.856);">SITE LICENSE (PDF), $3,800.00</span>
<span class="t" style="left:469.5px;top:738.3px;font:400 15px/1 'Liberation Sans',sans-serif;color:#333;transform:scaleX(0.876);">GLOBAL LICENSE (PDF), $5,000.00</span>
<span class="t" style="left:415.0px;top:789.3px;font:400 15px/1 'Liberation Sans',sans-serif;color:#6d6d6d;transform:scaleX(0.954);">Please choose the suitable license type from above.</span>
<span class="t" style="left:415.0px;top:814.3px;font:400 15px/1 'Liberation Sans',sans-serif;color:#6d6d6d;transform:scaleX(0.957);">More details are at given under tab "Report License</span>
<span class="t" style="left:415.0px;top:839.3px;font:400 15px/1 'Liberation Sans',sans-serif;color:#6d6d6d;transform:scaleX(0.950);">Types" below.</span>
<span class="t" style="left:532.3px;top:893.7px;font:700 16.5px/1 'Liberation Sans',sans-serif;color:#fff;letter-spacing:1.39px;transform:scaleX(0.970);-webkit-text-stroke:0.5px #fff;">ADD TO CART</span>
<span class="t" style="left:874.0px;top:390.7px;font:400 24px/1 'Liberation Sans',sans-serif;color:#1d3c54;">Why to buy from us?</span>
<span class="t" style="left:838.8px;top:462.6px;font:400 17px/1 'Liberation Sans',sans-serif;color:#fff;-webkit-text-stroke:0.35px #fff;">Globally Trusted Brand</span>
<span class="t" style="left:820.0px;top:513.8px;font:400 15px/1 'Liberation Sans',sans-serif;color:#6d6d6d;transform:scaleX(0.970);">We help executives from</span>
<span class="t" style="left:983.5px;top:513.8px;font:400 15px/1 'Liberation Sans',sans-serif;color:#f9a11b;transform:scaleX(0.958);">Fortune 500</span>
<span class="t" style="left:1065.5px;top:513.8px;font:400 15px/1 'Liberation Sans',sans-serif;color:#6d6d6d;transform:scaleX(0.966);">firms to</span>
<span class="t" style="left:820.0px;top:538.9px;font:400 15px/1 'Liberation Sans',sans-serif;color:#6d6d6d;transform:scaleX(0.971);">Start-ups with their market research needs thus we</span>
<span class="t" style="left:820.0px;top:563.9px;font:400 15px/1 'Liberation Sans',sans-serif;color:#6d6d6d;transform:scaleX(0.960);">can help you too.</span>
<span class="t" style="left:835.5px;top:623.6px;font:400 17px/1 'Liberation Sans',sans-serif;color:#fff;transform:scaleX(1.020);-webkit-text-stroke:0.35px #fff;">Shop With Confidence</span>
<span class="t" style="left:835.5px;top:687.6px;font:400 17px/1 'Liberation Sans',sans-serif;color:#fff;transform:scaleX(0.997);-webkit-text-stroke:0.35px #fff;">Secure Checkout</span>
<span class="t" style="left:834.4px;top:751.6px;font:400 17px/1 'Liberation Sans',sans-serif;color:#fff;transform:scaleX(1.017);-webkit-text-stroke:0.35px #fff;">Frequently Asked Questions</span>
<span class="t" style="left:49.6px;top:496.2px;font:400 18px/1 'Liberation Sans',sans-serif;color:#303030;transform:scaleX(1.025);">Global and Chinese APAC Aseptic</span>
<span class="t" style="left:49.6px;top:517.5px;font:400 18px/1 'Liberation Sans',sans-serif;color:#303030;transform:scaleX(1.021);">Packaging Industry, 2018 Market</span>
<span class="t" style="left:49.6px;top:538.8px;font:400 18px/1 'Liberation Sans',sans-serif;color:#303030;transform:scaleX(1.010);">Research Report</span>
<span class="t" style="left:82.7px;top:798.9px;font:400 13.5px/1 'DejaVu Sans','Liberation Sans',sans-serif;color:#fff;transform:scaleX(1.053);">www.marketresearchreports.com</span>
<span class="t" style="left:40.0px;top:845.6px;font:400 15.5px/1 'Liberation Sans',sans-serif;color:#f9a11b;transform:scaleX(0.935);">Printer version</span>
<span class="t" style="left:164.5px;top:845.6px;font:400 15.5px/1 'Liberation Sans',sans-serif;color:#f9a11b;transform:scaleX(0.914);">Send by email</span>
</body></html>
